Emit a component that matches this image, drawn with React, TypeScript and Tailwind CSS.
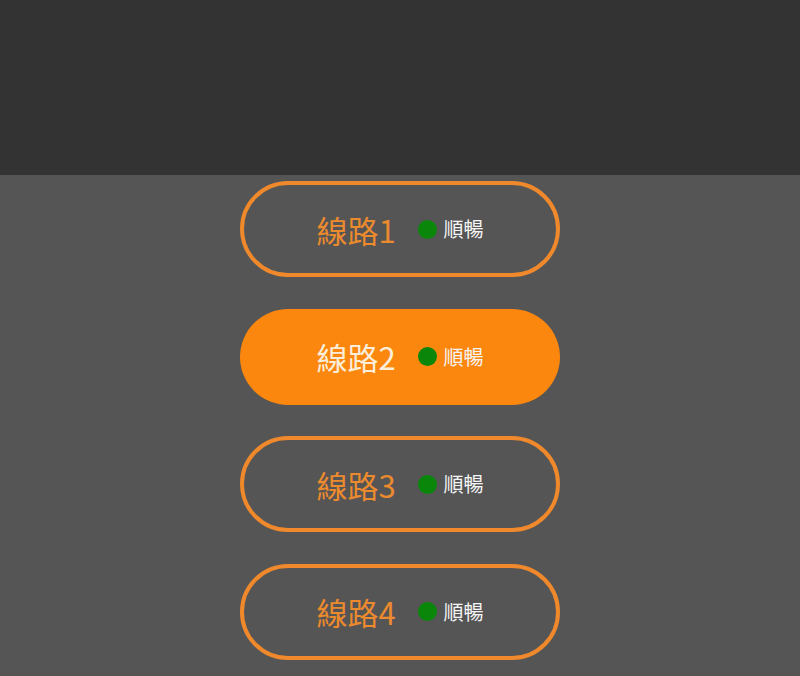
const LINES = [
  { name: "線路1", active: false },
  { name: "線路2", active: true },
  { name: "線路3", active: false },
  { name: "線路4", active: false },
];

export default function App() {
  return (
    <div
      className="flex h-[676px] w-[800px] flex-col overflow-hidden bg-[#555555]"
      style={{ fontFamily: '"Noto Sans CJK TC", "Noto Sans", sans-serif' }}
    >
      <div className="h-[175px] shrink-0 bg-[#333333]" />
      <div className="flex flex-col items-center gap-[31.5px] pt-[6px]">
        {LINES.map((line) => (
          <button
            key={line.name}
            className={
              line.active
                ? "flex h-[96px] w-[320px] items-center justify-center rounded-full bg-[#fc870f]"
                : "flex h-[96px] w-[320px] items-center justify-center rounded-full border-[4px] border-[#f0892b]"
            }
          >
            <span
              className={
                line.active
                  ? "text-[31px] leading-none text-[#fbeed9]"
                  : "text-[31px] leading-none text-[#ec8a2e]"
              }
            >
              {line.name}
            </span>
            <span className="ml-[22px] h-[19px] w-[19px] rounded-full bg-[#0a870a]" />
            <span className="ml-[7px] text-[20px] leading-none text-[#f4f4f4]">
              順暢
            </span>
          </button>
        ))}
      </div>
    </div>
  );
}
